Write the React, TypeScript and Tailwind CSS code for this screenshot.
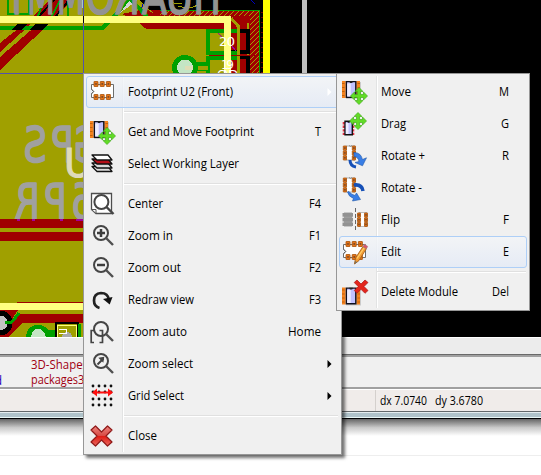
import React from 'react';

const FONT = "font-['Open_Sans','Noto_Sans',sans-serif]";

function Chip({ x = 0, y = 0 }: { x?: number; y?: number }) {
  return (
    <g transform={`translate(${x} ${y})`}>
      <path d="M4 2h15v17H4z" fill="#777" opacity=".3" />
      <path d="M1.8 1v17M16.2 1v17" stroke="#f5821f" strokeWidth="3.6" />
      <path d="M0 3.5h2.5M0 7.5h2.5M0 11.5h2.5M0 15.5h2.5M15.5 3.5H18M15.5 7.5H18M15.5 11.5H18M15.5 15.5H18" stroke="#b45a08" strokeWidth=".8" />
      <path d="M4.4 1.6h9.4v15.6H4.4z" fill="#c2c2ff" stroke="#10101c" strokeWidth="1.4" />
      <path d="M5.2 3.5h3.5v13H5.2z" fill="#eeeeff" />
      <path d="M7.2 1.2h3.8l-.8 1.8H8z" fill="#222" />
    </g>
  );
}

function Cross4({ x, y }: { x: number; y: number }) {
  return (
    <path
      transform={`translate(${x} ${y})`}
      d="M0-8.5 4-4.5H1.5V-1.5H4.5V-4L8.5 0 4.5 4V1.5H1.5V4.5H4L0 8.5-4 4.5H-1.5V1.5H-4.5V4L-8.5 0-4.5-4V-1.5H-1.5V-4.5H-4z"
      fill="#61dc25" stroke="#42ad1b" strokeWidth=".7"
    />
  );
}

function Pads({ xs, ys, s = 4 }: { xs: number[]; ys: number[]; s?: number }) {
  return (
    <>
      {ys.map((y) => xs.map((x) => (
        <g key={`${x}-${y}`}>
          <rect x={x} y={y} width={s} height={s + 1} rx=".3" fill="#e87518" stroke="#a75108" strokeWidth=".8" />
          <rect x={x + s / 2 - .8} y={y + s / 2 - .4} width="1.6" height="1.7" fill="#774a2a" />
        </g>
      )))}
    </>
  );
}

function Footprint() {
  return (
    <>
      <path d="M1.5 4.5h22v13h-22v-4l2-2-2-2z" fill="#fff" stroke="#6c6c6c" />
      <path d="m1.5 9 2.3 2.5L1.5 14" fill="none" stroke="#666" />
      <Pads xs={[4, 10.2, 16.4]} ys={[1.5, 14.5]} />
    </>
  );
}

function Lens({ inner }: { inner?: React.ReactNode }) {
  return (
    <>
      <circle cx="11" cy="9" r="7" fill="#f2f2f2" stroke="#454545" strokeWidth="2" />
      <path d="m16 14 7 7" stroke="#505050" strokeWidth="2.4" />
      {inner}
    </>
  );
}

function VerticalFootprint() {
  return (
    <>
      <path d="M4 2h9v14H4z" fill="#fff" stroke="#999" strokeWidth=".8" />
      <path d="M7 1.5q1.5 2 3 0" stroke="#888" fill="none" />
      <Pads xs={[1.3, 10.3]} ys={[2, 6.9, 11.8]} s={3.2} />
    </>
  );
}

function Icon({ name }: { name: string }) {
  const art: Record<string, React.ReactNode> = {
    footprint: <Footprint />,
    move: <><Chip /><Cross4 x={17} y={16} /></>,
    layers: (
      <g stroke="#111" strokeWidth="1.3" strokeLinejoin="round">
        <path d="M2 14.5h16l4 5H7z" fill="#ddd" />
        <path d="M2 11h16l4 5H7z" fill="#d8d8d8" />
        <path d="M2 7h16l4 5H7z" fill="#b50e18" />
        <path d="M2 3h16l4 5H7z" fill="#fff" />
      </g>
    ),
    center: (
      <>
        <path d="M1.5 1.5h20v20H6l-4.5-4z" fill="#fff" stroke="#4d4d4d" strokeWidth="1.3" />
        <path d="M1.5 17.5H6v4z" fill="#fff" stroke="#555" />
        <circle cx="11.4" cy="10" r="7" fill="#fff" stroke="#454545" strokeWidth="2" />
        <path d="m16.5 15 7 7" stroke="#454545" strokeWidth="2.4" />
      </>
    ),
    zoomin: <Lens inner={<path d="M7 9h8M11 5v8" stroke="#3d3d3d" strokeWidth="2.5" />} />,
    zoomout: <Lens inner={<path d="M7 9h8" stroke="#3d3d3d" strokeWidth="2.5" />} />,
    redraw: (
      <>
        <path d="M9.5 20Q4 18.5 4 12.5 4 5.5 11 5q7 0 8 7" fill="none" stroke="#222" strokeWidth="2.7" />
        <path d="m13 11 9.5-2-2.8 7.5z" fill="#111" />
      </>
    ),
    auto: (
      <>
        <Lens />
        <path d="M4 10.5H1.2v12H4M9.5 10.5h3v12h-3" fill="none" stroke="#444" strokeWidth="1.7" />
      </>
    ),
    zoomselect: <Lens inner={<><path d="m7.5 12.5 6-6" stroke="#444" strokeWidth="2" /><path d="m8.3 5.8 6-1-1 6z" fill="#444" /></>} />,
    grid: (
      <>
        {[3, 9, 15, 21].map((x) => [2, 8, 15, 21].map((y) => <circle key={`${x}-${y}`} cx={x} cy={y} r="1.4" fill="#111" />))}
        <path d="M3.5 8.5h18" stroke="#ff1010" strokeWidth="2" />
        <path d="M2 8.5 7 4.5v8zM23 8.5l-5-4v8z" fill="#ff1010" />
      </>
    ),
    close: (
      <path d="m5.5 2 6 6 6-6 4.5 4-6 6 6 6-4.5 4-6-6-6 6L1 18l6-6-6-6z" fill="url(#redX)" stroke="#8f1918" strokeWidth="1.2" strokeLinejoin="round" />
    ),
    drag: (
      <>
        <path d="M1.8 10v13M11.2 10v13" stroke="#df3142" strokeWidth="2.2" strokeDasharray="2.4 1.2" />
        <path d="M3 9.3h7.3v13.4H3z" fill="#c2c2ff" stroke="#111" strokeWidth="1.4" />
        <path d="M3.8 11h2.7v11H3.8z" fill="#eeeeff" />
        <path d="M5 9h3.3l-.7 1.8H5.8z" fill="#111" />
        <Cross4 x={16} y={9} />
      </>
    ),
    rotateplus: (
      <>
        <VerticalFootprint />
        <path d="M8 16q0 6 6 7" fill="none" stroke="#1650b7" strokeWidth="3" />
        <path d="M12 8.5q7 0 8.5 7l4-1.7-4 8-7.5-3.3 4-1q-.8-4.7-5-5z" fill="#397ee6" stroke="#2058a7" strokeWidth=".6" />
      </>
    ),
    rotateminus: (
      <>
        <VerticalFootprint />
        <path d="M12 9q8-1 9 6" fill="none" stroke="#1650b7" strokeWidth="3.5" />
        <path d="M7 15.5q2 3 6 4l1.5-2.5 4 6.5-8 1.5 1-2.5Q6.5 20.5 5.5 16z" fill="#397ee6" stroke="#2058a7" strokeWidth=".6" />
      </>
    ),
    flip: (
      <>
        <path d="M2 4.5h8v14H2z" fill="#a0a0a0" />
        <path d="M.5 5h10.5v3.7H.5zM.5 9.7h10.5v3.7H.5zM.5 14.4h10.5v3.7H.5z" fill="#929292" />
        <path d="M13.5 0v24" stroke="#666" strokeDasharray="4 2" />
        <path d="M17 4.5h8v14h-8z" fill="#fff" stroke="#aaa" strokeWidth=".8" />
        <Pads xs={[15.5, 22.5]} ys={[5, 9.7, 14.4]} s={3} />
      </>
    ),
    edit: (
      <>
        <Footprint />
        <path d="m12.5 24 1-6L21 6.5l3.5 2-7.5 12z" fill="#f39b35" stroke="#a96219" strokeWidth=".9" />
        <path d="m15 18.5 7-10.5" stroke="#ffd16b" strokeWidth="1.2" />
        <path d="m21 6.5 1.3-2.2 3.4 2.1-1.3 2.3z" fill="#db5269" stroke="#a77d7d" strokeWidth=".7" />
        <path d="m12.5 24 .6-3 2.2 1.2z" fill="#77705f" />
      </>
    ),
    delete: (
      <>
        <g transform="translate(0 6.5)"><Chip /></g>
        <path d="m15 0 4 4 4-4 3 2.5-4 4 4 4-3 2.8-4-4-4 4-2.8-2.8 4-4-4-4z" fill="#e3261d" stroke="#a91615" strokeWidth=".7" />
      </>
    ),
  };
  return <svg width="26" height="25" viewBox="0 0 26 25" className="block shrink-0 overflow-visible">{art[name]}</svg>;
}

type Entry = { icon: string; label: string; width: number; shortcut?: string; shortcutWidth?: number; arrow?: boolean; active?: boolean } | null;

const mainItems: Entry[] = [
  { icon: 'footprint', label: 'Footprint U2 (Front)', width: 105, arrow: true, active: true },
  null,
  { icon: 'move', label: 'Get and Move Footprint', width: 126, shortcut: 'T', shortcutWidth: 6 },
  { icon: 'layers', label: 'Select Working Layer', width: 111 },
  null,
  { icon: 'center', label: 'Center', width: 35, shortcut: 'F4', shortcutWidth: 12 },
  { icon: 'zoomin', label: 'Zoom in', width: 45, shortcut: 'F1', shortcutWidth: 12 },
  { icon: 'zoomout', label: 'Zoom out', width: 53, shortcut: 'F2', shortcutWidth: 12 },
  { icon: 'redraw', label: 'Redraw view', width: 66, shortcut: 'F3', shortcutWidth: 12 },
  { icon: 'auto', label: 'Zoom auto', width: 59, shortcut: 'Home', shortcutWidth: 33 },
  { icon: 'zoomselect', label: 'Zoom select', width: 65, arrow: true },
  { icon: 'grid', label: 'Grid Select', width: 56, arrow: true },
  null,
  { icon: 'close', label: 'Close', width: 29 },
];

const subItems: Entry[] = [
  { icon: 'move', label: 'Move', width: 30, shortcut: 'M', shortcutWidth: 10 },
  { icon: 'drag', label: 'Drag', width: 25, shortcut: 'G', shortcutWidth: 8 },
  { icon: 'rotateplus', label: 'Rotate +', width: 44, shortcut: 'R', shortcutWidth: 7 },
  { icon: 'rotateminus', label: 'Rotate -', width: 41 },
  { icon: 'flip', label: 'Flip', width: 19, shortcut: 'F', shortcutWidth: 6 },
  { icon: 'edit', label: 'Edit', width: 20, shortcut: 'E', shortcutWidth: 6, active: true },
  null,
  { icon: 'delete', label: 'Delete Module', width: 77, shortcut: 'Del', shortcutWidth: 17 },
];

/* Text fitted to the advance width of the system menu font. */
function Label({ text, width, color = '#000' }: { text: string; width: number; color?: string }) {
  return (
    <svg width={width} height="18" className="block shrink-0 overflow-visible">
      <text x="0" y="13" fontSize="12" textLength={width} lengthAdjust="spacingAndGlyphs" fill={color} className={FONT}>{text}</text>
    </svg>
  );
}

function Menu({ items, sub = false }: { items: Entry[]; sub?: boolean }) {
  return (
    <div className={`border border-[#979797] bg-[#f0f0f0] p-[2px] ${sub ? 'w-[194px]' : 'w-[259px] shadow-[3px_3px_3px_rgba(0,0,0,0.55)]'}`}>
      <div className={sub ? 'bg-[linear-gradient(90deg,transparent_37px,#e2e3e3_37px,#e2e3e3_38px,white_38px,white_39px,transparent_39px)]' : 'bg-[linear-gradient(90deg,transparent_36px,#e2e3e3_36px,#e2e3e3_37px,white_37px,white_38px,transparent_38px)]'}>
        {items.map((item, i) => item ? (
          <div key={i} className={`flex h-8 items-center rounded-[3px] border ${sub ? 'pl-[2px] pr-[17px]' : 'pl-[3px]'} ${item.arrow ? 'pr-[5px]' : sub ? '' : 'pr-[17px]'} ${item.active ? 'border-[#aecff7] bg-linear-to-b from-[#f3f5f8]/80 to-[#e3eaf6]/80' : 'border-transparent'}`}>
            <Icon name={item.icon} />
            <div className={`flex flex-1 items-center justify-between ${sub ? 'pl-[13px]' : 'pl-[12px]'}`}>
              <Label text={item.label} width={item.width} />
              {item.shortcut && <Label text={item.shortcut} width={item.shortcutWidth!} />}
              {item.arrow && <svg width="5" height="8" viewBox="0 0 5 8" className="mr-[1px]"><path d="M.5 0 4.5 4 .5 8z" fill={item.active ? '#fff' : '#000'} /></svg>}
            </div>
          </div>
        ) : (
          <div key={i} className="flex h-2 items-center pl-[38px] pr-[1px]">
            <div className="h-[2px] w-full border-t border-[#e0e0e0] bg-white" />
          </div>
        ))}
      </div>
    </div>
  );
}

/* Silkscreen letters on the back layer, mirrored; x is the letter's right edge. */
function BackLetter({ ch, x, y, wide = false }: { ch: string; x: number; y: number; wide?: boolean }) {
  return (
    <text
      transform={`translate(${x} ${y}) scale(${wide ? -0.66 : -0.74} 1)`}
      fontSize="50" strokeWidth="1.6" strokeLinejoin="round"
      className="font-['DejaVu_Sans',sans-serif]"
    >{ch}</text>
  );
}

function Board() {
  return (
    <svg width="541" height="337" viewBox="0 0 541 337" shapeRendering="crispEdges" className="block shrink-0">
      <defs>
        <linearGradient id="redX" x2="0" y2="1"><stop stopColor="#ed8580" /><stop offset=".48" stopColor="#d94a44" /><stop offset=".5" stopColor="#e01912" /><stop offset="1" stopColor="#e96a60" /></linearGradient>
        <pattern id="hatch" width="5" height="5" patternUnits="userSpaceOnUse"><path d="m0 5 5-5" stroke="#a0a000" strokeWidth="1" /></pattern>
      </defs>
      <rect width="541" height="337" fill="#000" />
      <rect width="258" height="337" fill="#a0a000" />
      {/* upper copper pour and board edge */}
      <path d="M140 0h130v10h-122z" fill="#000" />
      <path d="M122 14 140 10h119v63h-10V23H140z" fill="#a00000" />
      <path d="M160 10h99v6h-99zM250 16h9v57h-9z" fill="url(#hatch)" />
      <path d="M160 10h99v63" fill="none" stroke="#00a000" />
      <path d="M262 12v61" stroke="#700000" strokeWidth="2" strokeDasharray="1 4" />
      <path d="M34 16 49 0h23L57 16z" fill="#a00000" />
      <path d="M39 16 54 0M56 16 69 0" stroke="#000" strokeWidth="2" />
      <path d="M8 0v14h21V0M44 0 38 16M60 0l-8 16M68 0v16" fill="none" stroke="#00a000" strokeWidth="2" />
      <path d="M80 0h3v8h-3z" fill="#e9e9d0" />
      <path d="M120 0h18L120 13z" fill="#d4d4d4" />
      <path d="m134 9 9-4 10 8M178 6q11 4 20-1M170 0q3 5 12 3" fill="none" stroke="#a0a000" />
      <path d="M143 4l-2 6M251 0l4 4" stroke="#0000c0" />
      <path d="M24 24h7L0 52V43zM38 24h11L0 70V57z" fill="#a00000" />
      <path d="M0 27.5h103l15-15 11-15 18 19" fill="none" stroke="#00a000" strokeWidth="4" />
      <path d="M18 24h10l-7 6H11zM36 24h13l-7 6H29z" fill="#000" />
      <path d="M140 23h90v6h-82q-4 0-8-6z" fill="#a00000" />
      <path d="M206 29h25v44h-25z" fill="#a0a000" />
      <path d="M231 22h16v51h-16z" fill="#a00000" />
      <path d="M231 31h17v21h-17M231 57h17v16" fill="none" stroke="#000" strokeWidth="4" />
      <path d="M240 31h-32v22h32M240 58h-32v15" fill="none" stroke="#00a000" strokeWidth="4" />
      <path d="m231 18 7 8v47" fill="none" stroke="#a0a000" strokeWidth="3" />
      <path d="M209 55.5h50" stroke="#a00000" />
      <path d="M194 66h14" stroke="#00a000" strokeWidth="9" />
      <path d="M186 68h22" stroke="#a0a000" strokeWidth="4" />
      <circle cx="185" cy="68" r="13" fill="#00a000" />
      <circle cx="185" cy="67.5" r="8" fill="#c4e5c4" />
      <path d="M185 66h8v4h-8z" fill="#deddb6" />
      <g fill="#929292" stroke="#929292">
        <BackLetter ch="H" x={221} y={14} />
        <BackLetter ch="U" x={193} y={14} />
        <BackLetter ch="A" x={167} y={14} />
        <BackLetter ch="R" x={140} y={14} />
        <BackLetter ch="O" x={115} y={14} />
        <BackLetter ch="M" x={85} y={14} wide />
        <BackLetter ch="M" x={55} y={14} wide />
        <BackLetter ch="P" x={22} y={14} />
      </g>
      <path d="M0 19.5h227.5V73" fill="none" stroke="#ffff80" strokeWidth="7" />
      <path d="M266.5 0v73" stroke="#ff0" strokeWidth="7" />
      <path d="M304.5 0v73" stroke="#c0c0c0" strokeWidth="5" />
      <path d="m218 33 5 5M231 45l5 6" stroke="#a000a0" strokeWidth="1" />
      <g fill="#fff" fontSize="13" className="font-['DejaVu_Sans',sans-serif]">
        <text x="219" y="46" textLength="16">20</text><text x="221" y="69" fontSize="12" textLength="13">19</text><text x="217" y="79" fontSize="12" textLength="21">GND</text>
      </g>
      {/* board legends are viewed from the back */}
      <g fill="#a0a0a0" stroke="#a0a0a0">
        <BackLetter ch="S" x={47} y={162} />
        <BackLetter ch="P" x={74} y={162} />
        <BackLetter ch="G" x={102} y={162} />
        <BackLetter ch="R" x={40} y={219} />
        <BackLetter ch="P" x={67} y={219} />
        <BackLetter ch="6" x={95} y={219} />
      </g>
      <text x="64" y="177" fontSize="39" fill="#dedaba" stroke="#dedaba" strokeWidth="1.2" className="font-['DejaVu_Sans',sans-serif]">U</text>
      <path d="M0 219h83v9H0zM0 232h83v9H0z" fill="#a00000" />
      <path d="M17 220h3M32 220h3M60 220h3M76 220h7" stroke="#a000a0" strokeWidth="2" />
      <path d="M17 302.5h66" stroke="#a00000" />
      <path d="M0 303h83v7H0z" fill="#ffff80" />
      <path d="M0 310h83v27H0z" fill="#a0a000" />
      <path d="M0 310h18l-9 14H0zM20 314h63v9H22L8 337H0v-3z" fill="#a00000" />
      <circle cx="0" cy="323" r="10" fill="#c4c4c4" stroke="#000" strokeWidth="5" />
      <path d="m5 323 7-1 7-9" fill="none" stroke="#00a000" strokeWidth="3" />
      <path d="M26 337q1-12 12-12 7 0 10 5h8v7z" fill="#00a000" />
      <path d="M31 337q1-8 7-8t8 8z" fill="#c4e5c4" />
      <path d="M56 337v-14h22v14" fill="none" stroke="#000" strokeWidth="2" />
      <path d="M57.5 337v-12h19v12" fill="none" stroke="#ffff80" strokeWidth="1" />
      <path d="M79 324v13" stroke="#00a000" strokeWidth="3" />
      <circle cx="67" cy="337" r="5" fill="#aaa" />
      <path d="M59 329.5h7v4h-7" fill="none" stroke="#fff" />
      <path d="M83.5 0v73M0 73.5h336" stroke="#5353ac" />
      <path d="M83 16h1v7h-1z" fill="#000" />
    </svg>
  );
}

export default function App() {
  return (
    <div className={`relative h-[475px] w-[541px] overflow-hidden bg-white ${FONT}`}>
      <div className="flex h-[475px] flex-col">
        <Board />
        <div className="h-[17px] shrink-0 border-t border-white bg-[#ececec]" />
        <div className="flex h-[33px] shrink-0 border-t border-[#696969] bg-[#f0f0f0] shadow-[inset_0_2px_#a0a0a0]">
          <div className="w-[31px] overflow-hidden pt-[17px]"><div className="-ml-[5px]"><Label text="d" width={7} color="#2600bd" /></div></div>
          <div className="flex w-[52px] flex-col overflow-hidden pt-[1px]">
            <Label text="3D-Shapes" width={57} color="#a00010" />
            <div className="-mt-[3px]"><Label text="packages3d" width={60} color="#a00010" /></div>
          </div>
        </div>
        <div className="flex h-[24px] shrink-0 border-t-2 border-[#a0a0a0] bg-[#f0ecea] shadow-[inset_0_1px_white]">
          <div className="mt-[1px] w-[376px] border-r border-[#d4d0cd]" />
          <div className="flex gap-[8px] pl-[4px] pt-[3px]"><Label text="dx 7.0740" width={47} /><Label text="dy 3.6780" width={48} /></div>
        </div>
        <div className="h-[8px] shrink-0 border-t border-b border-t-[#63686a] border-b-black bg-[#b0c3ca] shadow-[inset_0_1px_#e5edef,inset_0_-1px_#eaf8f7]" />
        <div className="h-[17px] shrink-0 bg-linear-to-b from-[#666] via-[#c9c9c9] to-white" />
        <div className="h-[20px] shrink-0 border-b border-[#eee]" />
      </div>
      <div className="absolute left-[83px] top-[73px]"><Menu items={mainItems} /></div>
      <div className="absolute left-[336px] top-[73px]"><Menu items={subItems} sub /></div>
    </div>
  );
}
